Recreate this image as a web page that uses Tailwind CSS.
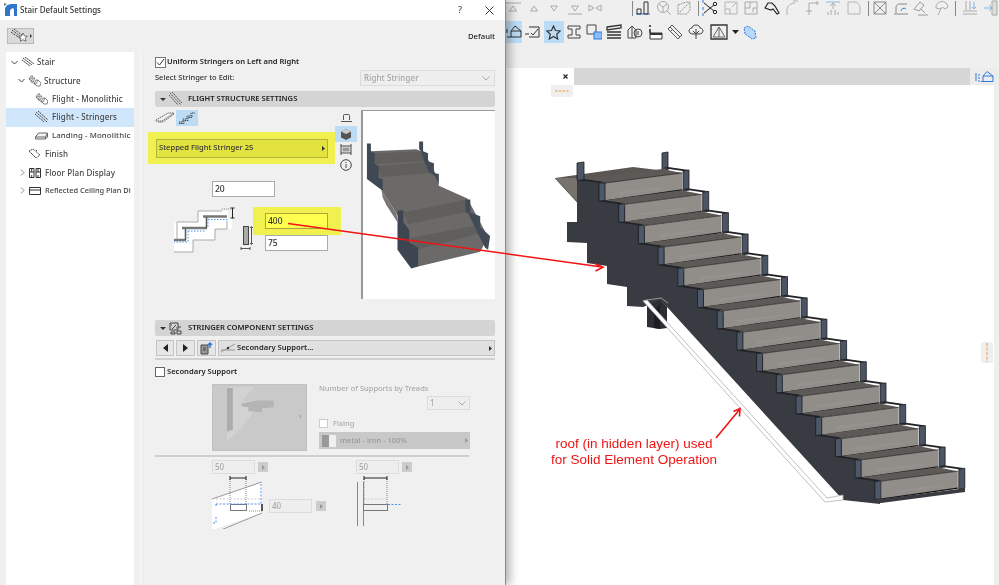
<!doctype html>
<html>
<head>
<meta charset="utf-8">
<title>Stair Default Settings</title>
<script src="https://cdn.jsdelivr.net/npm/@tailwindcss/browser@4"></script>
</head>
<body class="m-0 overflow-hidden bg-white">
<div class="relative flex h-[585px] w-[999px] overflow-hidden bg-white font-['Noto_Sans',sans-serif] text-[8px] text-[#222] blur-[0.35px]">

  <!-- DIALOG -->
  <section class="relative z-10 flex h-full w-[506px] shrink-0 flex-col border-r border-[#8a8a8a] bg-[#f0f0f0] shadow-[4px_0_9px_rgba(0,0,0,0.3)]">
    <header class="flex h-[20px] shrink-0 items-center bg-white">
      <svg class="ml-[4px] h-[16px] w-[14px] shrink-0" viewBox="0 0 14 16"><path d="M1 14V8C1 4 4 2 8 2h5v12h-3V8C10 6.500 9 6 8 6.500 6.500 7 6 8 6 10v4z" fill="#2f76c9"/><path d="M0 1l3 1-3 2z" fill="#777"/></svg>
      <span class="ml-[2px] text-[8px] font-medium text-[#333]">Stair Default Settings</span>
      <span class="ml-auto text-[9px] text-[#333]">?</span>
      <svg class="ml-[23px] mr-[11px] h-[9px] w-[9px] shrink-0" viewBox="0 0 9 9"><path d="M.5.5l8 8M8.500.5l-8 8" stroke="#333" fill="none"/></svg>
    </header>

    <div class="flex h-[32px] shrink-0 items-start justify-between px-[7px] pt-[8px]">
      <div class="flex h-[16px] w-[27px] items-center justify-center border border-[#bbb] bg-[#d9d9d9]">
        <svg class="h-[14px] w-[22px]" viewBox="0 0 22 14"><path d="M2 1l12 9M4 0l12 9M1 3l10 7" stroke="#444" stroke-dasharray="2 1" fill="none"/><path d="M13 4l1.500 3 3 .3-2.300 2 .7 3-2.900-1.600-2.700 1.600.7-3-2.300-2 3-.3z" fill="#fff" stroke="#555" stroke-width=".8"/><path d="M20 5l2 2-2 2z" fill="#333"/></svg>
      </div>
      <span class="mr-[3px] mt-[3px] text-[7.700px] font-medium text-[#222]">Default</span>
    </div>

    <div class="flex min-h-0 flex-1 pl-[6px]">
      <!-- tree -->
      <nav class="h-full w-[128px] shrink-0 overflow-hidden whitespace-nowrap bg-white pt-[1px] text-[8px] font-medium tracking-[0.1px] text-[#444]">
        <div class="flex h-[18.400px] items-center pl-[5px]">
          <svg class="h-[7px] w-[7px] shrink-0" viewBox="0 0 7 7"><path d="M.5 2l3 3 3-3" stroke="#444" fill="none"/></svg>
          <svg class="ml-[4px] h-[10px] w-[12px] shrink-0" viewBox="0 0 12 10"><path d="M1 1l9 7M3 0l9 7M0 3l8 6" stroke="#333" stroke-dasharray="2 .6" fill="none"/></svg>
          <span class="ml-[3px]">Stair</span>
        </div>
        <div class="flex h-[18.400px] items-center pl-[12px]">
          <svg class="h-[7px] w-[7px] shrink-0" viewBox="0 0 7 7"><path d="M.5 2l3 3 3-3" stroke="#444" fill="none"/></svg>
          <svg class="ml-[3px] h-[12px] w-[13px] shrink-0" viewBox="0 0 13 12"><path d="M1 4l2-3h2l-2 3zM3 7l2-4h2L5 7zM6 9l2-4h2L8 9zM1 4l8 7h3l1-3-3-3" stroke="#666" stroke-width=".8" fill="none"/></svg>
          <span class="ml-[3px]">Structure</span>
        </div>
        <div class="flex h-[18.400px] items-center pl-[29px]">
          <svg class="h-[12px] w-[13px] shrink-0" viewBox="0 0 13 12"><path d="M1 4l2-3h2l-2 3zM3 7l2-4h2L5 7zM6 9l2-4h2L8 9zM1 4l8 7h3l1-3-3-3" stroke="#666" stroke-width=".8" fill="none"/></svg>
          <span class="ml-[4px]">Flight - Monolithic</span>
        </div>
        <div class="flex h-[18.400px] items-center bg-[#cfe6fb] pl-[29px]">
          <svg class="h-[12px] w-[13px] shrink-0" viewBox="0 0 13 12"><path d="M1 1l11 10M3 0l10 9M0 3l9 8" stroke="#444" stroke-dasharray="2 .7" fill="none"/></svg>
          <span class="ml-[4px]">Flight - Stringers</span>
        </div>
        <div class="flex h-[18.400px] items-center pl-[29px]">
          <svg class="h-[9px] w-[13px] shrink-0" viewBox="0 0 13 9"><path d="M.5 6l3-4h9l-2 4zM.5 6v2h10V6M10.500 8l2-2V2" stroke="#666" fill="#f4f4f4"/></svg>
          <span class="ml-[4px] text-[7.800px]">Landing - Monolithic</span>
        </div>
        <div class="flex h-[18.400px] items-center pl-[22px]">
          <svg class="h-[12px] w-[13px] shrink-0" viewBox="0 0 13 12"><path d="M1 3l4-2 7 6-4 3zM3 6l1-1M6 9l1-1M9 2l-1 1" stroke="#444" stroke-dasharray="1.500 .6" fill="none"/></svg>
          <span class="ml-[4px]">Finish</span>
        </div>
        <div class="flex h-[18.400px] items-center pl-[14px]">
          <svg class="h-[7px] w-[5px] shrink-0" viewBox="0 0 5 7"><path d="M1 .5l3 3-3 3" stroke="#888" fill="none"/></svg>
          <svg class="ml-[4px] h-[10px] w-[12px] shrink-0" viewBox="0 0 12 10"><path d="M.5.500h4.500v9H.5zM7 .500h4.500v9H7zM.5 4h4.500M7 4h4.500M2.700.500V4M9 .500V4M2.700 7v2.500M9 7v2.500" stroke="#333" fill="none"/></svg>
          <span class="ml-[4px]">Floor Plan Display</span>
        </div>
        <div class="flex h-[18.400px] items-center pl-[14px]">
          <svg class="h-[7px] w-[5px] shrink-0" viewBox="0 0 5 7"><path d="M1 .5l3 3-3 3" stroke="#888" fill="none"/></svg>
          <svg class="ml-[4px] h-[8px] w-[12px] shrink-0" viewBox="0 0 12 8"><path d="M.5.500h11v7H.5zM.5 3h11" stroke="#333" fill="none"/></svg>
          <span class="ml-[4px] text-[7.400px] tracking-normal">Reflected Ceiling Plan Di</span>
        </div>
      </nav>

      <!-- settings -->
      <div class="ml-[6px] flex h-full w-[365px] flex-col overflow-hidden border-l border-[#f8f8f8] pl-[14px] pr-[10px] font-medium">
        <div class="mt-[3px] flex h-[14px] shrink-0 items-center">
          <span class="flex h-[11px] w-[11px] shrink-0 items-center justify-center border border-[#777] bg-white">
            <svg class="h-[9px] w-[9px]" viewBox="0 0 9 9"><path d="M1 4.500l2.500 2.500L8 1" stroke="#333" fill="none"/></svg>
          </span>
          <span class="ml-[1px] text-[7.600px] font-semibold text-[#222]">Uniform Stringers on Left and Right</span>
        </div>
        <div class="mt-[1px] flex h-[16px] shrink-0 items-center justify-between">
          <span class="text-[7.500px] text-[#333]">Select Stringer to Edit:</span>
          <div class="flex h-[16px] w-[135px] items-center justify-between border border-[#dcdcdc] bg-[#eee] pl-[3px] pr-[4px] tracking-[0.1px] text-[#a5a5a5]">
            <span>Right Stringer</span>
            <svg class="h-[5px] w-[8px]" viewBox="0 0 8 5"><path d="M.5.500L4 4 7.500.5" stroke="#aaa" fill="none"/></svg>
          </div>
        </div>
        <div class="mt-[5px] flex h-[16px] shrink-0 items-center rounded-[2px] bg-[#d4d4d4] pl-[5px]">
          <svg class="h-[3px] w-[6px]" viewBox="0 0 6 3"><path d="M0 0h6L3 3z" fill="#333"/></svg>
          <svg class="ml-[3px] h-[14px] w-[13px]" viewBox="0 0 13 14"><path d="M1 1l11 12M3 0l10 11M0 3l9 10" stroke="#555" stroke-dasharray="2 .7" fill="none"/></svg>
          <span class="ml-[6px] text-[7.600px] font-semibold text-[#222]">FLIGHT STRUCTURE SETTINGS</span>
        </div>

        <div class="mt-[3px] flex shrink-0">
          <div class="w-[206px] shrink-0">
            <div class="flex h-[16px] items-center">
              <svg class="h-[14px] w-[20px]" viewBox="0 0 20 14"><path d="M1 9l12-7 6 0-12 8H1zM3 11h5l11-8" stroke="#666" stroke-dasharray="1.500 .7" fill="none"/></svg>
              <span class="ml-[1px] flex h-[16px] w-[22px] items-center justify-center bg-[#bcdcf5]">
                <svg class="h-[12px] w-[18px]" viewBox="0 0 18 12"><path d="M1 10h4V7h4V4h4V1h4M1 11.500h5V8.500h4V5.500h4V3" stroke="#444" stroke-dasharray="1.500 .7" fill="none"/></svg>
              </span>
            </div>
            <div class="-ml-[7px] mt-[6px] flex h-[32px] w-[187px] items-center bg-[#f0f050] pl-[8px]">
              <div class="flex h-[19px] w-[172px] items-center justify-between border border-[#b3b33c] bg-[#e3e340] pl-[2px] pr-[2px] text-[7.600px] text-[#333]">
                <span>Stepped Flight Stringer 25</span>
                <svg class="h-[5px] w-[3px]" viewBox="0 0 3 5"><path d="M0 0l3 2.500L0 5z" fill="#333"/></svg>
              </div>
            </div>
            <div class="ml-[57px] mt-[17px] flex h-[16px] w-[63px] items-center border border-[#aaa] bg-white pl-[2px] text-[8.500px] text-[#333]">20</div>
            <div class="relative mt-[8px] flex h-[50px]">
              <svg class="ml-[19px] mt-[1px] h-[47px] w-[80px] shrink-0" viewBox="174 206 80 47">
                <path d="M174 252v-29h3v-1h21v-11h30v7h4v11h-17v11h-22v12z" fill="#fff"/>
                <path d="M177 240v-18h21v-11h24M174 252h19v-12h22v-11h12v-8" stroke="#aaa" fill="none"/>
                <path d="M203 216.500h24M182 228h25M174 240h12" stroke="#777" stroke-width="2.500" fill="none"/>
                <path d="M206.500 217v11M185.500 229v11" stroke="#555" stroke-width="1.500" fill="none"/>
                <path d="M208 219.500h20M208 219v9M188 231h18M188 231v11h-14" stroke="#4d94ee" stroke-dasharray="1.500 1.500" fill="none"/>
                <path d="M222 209h9" stroke="#888" stroke-dasharray="1 1" fill="none"/>
                <path d="M232.500 208v10M230.500 208h4M230.500 218h4" stroke="#222" fill="none"/>
                <rect x="243.500" y="226.500" width="5" height="18" fill="#aaa" stroke="#444"/>
                <path d="M251.500 227v17M250 228l1.500-1.500 1.500 1.500M250 243l1.500 1.500 1.500-1.500M241 248.500h9M241 247v3M250 247v3" stroke="#333" stroke-width=".8" fill="none"/>
              </svg>
              <div class="absolute left-[98px] top-[2px] h-[28px] w-[88px] bg-[#f0f050]"></div>
              <div class="absolute left-[110px] top-[8px] flex h-[16px] w-[63px] items-center border border-[#a7a73a] bg-[#ffff50] pl-[2px] text-[8.500px] text-[#333]">400</div>
              <div class="absolute left-[110px] top-[30px] flex h-[16px] w-[63px] items-center border border-[#aaa] bg-white pl-[2px] text-[8.500px] text-[#333]">75</div>
            </div>
          </div>
          <div class="-ml-[26px] flex h-[62px] w-[22px] shrink-0 flex-col items-center pt-[3px]">
            <svg class="h-[10px] w-[11px]" viewBox="0 0 11 10"><path d="M2.500 7V2.500a1 1 0 011-1h4a1 1 0 011 1V7M0 8.500h11" stroke="#555" fill="none"/></svg>
            <span class="mt-[3px] flex h-[16px] w-[22px] items-center justify-center bg-[#bcdcf5]">
              <svg class="h-[11px] w-[10px]" viewBox="0 0 10 11"><path d="M5 0l5 2.500v6L5 11 0 8.500v-6z" fill="#555"/><path d="M0 2.500L5 5l5-2.500L5 0z" fill="#ccc"/></svg>
            </span>
            <svg class="mt-[2px] h-[11px] w-[12px]" viewBox="0 0 12 11"><path d="M1 0v11M11 0v11M1 2h10M1 9h10" stroke="#444" fill="none"/><rect x="2.500" y="3.500" width="7" height="4" fill="#999"/></svg>
            <svg class="mt-[4px] h-[12px] w-[12px]" viewBox="0 0 12 12"><circle cx="6" cy="6" r="5.300" stroke="#444" fill="none"/><path d="M6 5v4M6 3v1" stroke="#444"/></svg>
          </div>
          <svg class="ml-[4px] h-[189px] w-[134px] border-l-2 border-t border-[#999] bg-white" viewBox="361 110 134 189">
            <path d="M369 150L415 148 423 151 435 173 438 185 467 198 475 213 488 237 480 252 417 267 410 250 402 225 395 213 380 190 370 167z" fill="#6c6a69"/>
            <path d="M380 190L395 213 396 222 385 205 381 197z" fill="#777573"/>
            <path d="M372 152L420 150 424 160 374 163zM376 165L425 161 431 172 379 176zM402 212L466 199 468 211 407 224zM409 238L476 225 478 234 415 250z" fill="#615f5e"/>
            <path d="M365 142L369 142 369 150 373 152 373 163 377 165 377 177 381 178 381 190 365 178z" fill="#3f4853"/>
            <path d="M396 210L402 210 402 222 408 230 408 242 417 248 417 267 410 269 396 250z" fill="#3d4550"/>
            <path d="M418 140L422 140 422 150 427 152 427 160 433 162 433 172 438 173 438 184 434 175 428 171 423 160 420 150 418 148z" fill="#414a57"/>
            <path d="M465 199L470 199 470 212 480 216 480 227 490 236 488 250 485 248 475 228 468 213 465 212z" fill="#414a57"/>
          </svg>
        </div>

        <div class="mt-[21px] flex h-[16px] shrink-0 items-center rounded-[2px] bg-[#d4d4d4] pl-[5px]">
          <svg class="h-[3px] w-[6px]" viewBox="0 0 6 3"><path d="M0 0h6L3 3z" fill="#333"/></svg>
          <svg class="ml-[3px] h-[13px] w-[13px]" viewBox="0 0 13 13"><path d="M1 1h8v7H1zM3 7l4-4M2 3h1M7 6h1M2 10h4v2H2zM8 9h4v3H8zM9 5h3" stroke="#444" fill="none"/></svg>
          <span class="ml-[6px] text-[7.600px] font-semibold text-[#222]">STRINGER COMPONENT SETTINGS</span>
        </div>
        <div class="mt-[4px] flex h-[17px] shrink-0 gap-[2px] pl-[1px]">
          <span class="flex h-[16px] w-[18px] items-center justify-center border border-[#c4c4c4] bg-[#e6e6e6]"><svg class="h-[8px] w-[5px]" viewBox="0 0 5 8"><path d="M5 0L0 4l5 4z" fill="#222"/></svg></span>
          <span class="flex h-[16px] w-[19px] items-center justify-center border border-[#c4c4c4] bg-[#e6e6e6]"><svg class="h-[8px] w-[5px]" viewBox="0 0 5 8"><path d="M0 0l5 4-5 4z" fill="#222"/></svg></span>
          <span class="flex h-[16px] w-[19px] items-center justify-center border border-[#c4c4c4] bg-[#e6e6e6]"><svg class="h-[13px] w-[13px]" viewBox="0 0 13 13"><path d="M1 3h7v9H1z" fill="#999" stroke="#444"/><path d="M3 6h3M3 8h3" stroke="#444"/><path d="M10 6V1M8 3l2-2 2 2" stroke="#2d7bdc" stroke-width="1.500" fill="none"/></svg></span>
          <div class="flex h-[16px] flex-1 items-center border border-[#c4c4c4] bg-[#e0e0e0] pl-[2px] pr-[2px]">
            <svg class="h-[10px] w-[14px]" viewBox="0 0 14 10"><path d="M0 9l14-8M0 7h14" stroke="#999" fill="none"/><circle cx="7" cy="5" r="1.200" fill="#333"/></svg>
            <span class="ml-[2px] text-[7.600px] font-semibold">Secondary Support...</span>
            <svg class="ml-auto h-[5px] w-[3px]" viewBox="0 0 3 5"><path d="M0 0l3 2.500L0 5z" fill="#333"/></svg>
          </div>
        </div>
        <div class="mt-[1px] h-[2px] shrink-0 bg-[#d0d0d0]"></div>
        <div class="mt-[6px] flex h-[12px] shrink-0 items-center">
          <span class="h-[10px] w-[10px] shrink-0 border border-[#666] bg-white"></span>
          <span class="ml-[2px] text-[7.600px] font-semibold">Secondary Support</span>
        </div>

        <div class="mt-[6px] flex h-[67px] shrink-0 pl-[57px]">
          <div class="relative h-[67px] w-[95px] border border-[#c0c0c0] bg-[#c9c9c9]">
            <svg class="h-full w-full" viewBox="212 384 95 67"><path d="M226 386h28l-12 14 20 2-25 30-11 10z" fill="#d2d2d2"/><path d="M226 387h6v43l-6 2z" fill="#acacac"/><path d="M241 403l16-3h17v7l-12 1v4l-14-1v-4l-7-1z" fill="#b4b4b4"/><path d="M301 414l2 2-2 3z" fill="#a5a5a5"/></svg>
          </div>
          <div class="ml-[12px] w-[151px] text-[#aaa]">
            <div class="-mt-[1px] text-[7.500px]">Number of Supports by Treads</div>
            <div class="ml-[108px] mt-[2px] flex h-[14px] w-[43px] items-center justify-between border border-[#dcdcdc] bg-[#eee] pl-[2px] pr-[3px]"><span>1</span><svg class="h-[5px] w-[8px]" viewBox="0 0 8 5"><path d="M.5.500L4 4 7.500.5" stroke="#aaa" fill="none"/></svg></div>
            <div class="mt-[8px] flex h-[10px] items-center"><span class="h-[9px] w-[9px] border border-[#ccc] bg-white"></span><span class="ml-[5px] text-[7.500px]">Fixing</span></div>
            <div class="mt-[4px] flex h-[17px] items-center bg-[#c8c8c8] pl-[3px] pr-[2px] text-[#999]">
              <span class="h-[12px] w-[7px] bg-[#999]"></span><span class="h-[12px] w-[7px] bg-[#f0f0f0]"></span>
              <span class="ml-[4px] text-[7.500px]">metal - iron - 100%</span>
              <svg class="ml-auto h-[5px] w-[3px]" viewBox="0 0 3 5"><path d="M0 0l3 2.500L0 5z" fill="#999"/></svg>
            </div>
          </div>
        </div>
        <div class="mt-[4px] h-[2px] w-[314px] shrink-0 bg-[#cfcfcf]"></div>

        <div class="mt-[3px] flex shrink-0 pl-[57px] text-[#a8a8a8]">
          <div class="w-[144px]">
            <div class="flex items-center">
              <span class="flex h-[14px] w-[43px] items-center border border-[#dcdcdc] bg-[#eee] pl-[2px]">50</span>
              <span class="ml-[3px] flex h-[10px] w-[10px] items-center justify-center bg-[#ccc]"><svg class="h-[5px] w-[3px]" viewBox="0 0 3 5"><path d="M0 0l3 2.500L0 5z" fill="#999"/></svg></span>
            </div>
            <div class="flex">
              <svg class="h-[55px] w-[52px] shrink-0" viewBox="212 473 52 55">
                <path d="M212 498l50-17v31l-50 17z" fill="#fff"/>
                <path d="M212 498l50-17M221 529l41-17" stroke="#999" fill="none"/>
                <path d="M230 478v25M246 478v25M249 510h13" stroke="#888" stroke-dasharray="1 1" fill="none"/>
                <path d="M230 477h16M230 475v4M246 475v4" stroke="#222" fill="none"/>
                <rect x="230.500" y="503.500" width="16" height="6" fill="none" stroke="#777"/>
                <path d="M216 503h46M261 483v20M216 503v3M216 516v6h-3" stroke="#4d94ee" stroke-dasharray="2 1.500" fill="none"/>
                <path d="M216 498h44" stroke="#ccc" stroke-dasharray="2 1.500" fill="none"/>
                <path d="M262 503v7" stroke="#222" stroke-width="1.500"/>
              </svg>
              <div class="ml-[5px] mt-[25px] flex h-[14px] items-center">
                <span class="flex h-[14px] w-[43px] items-center border border-[#dcdcdc] bg-[#eee] pl-[2px]">40</span>
                <span class="ml-[4px] flex h-[10px] w-[10px] items-center justify-center bg-[#ccc]"><svg class="h-[5px] w-[3px]" viewBox="0 0 3 5"><path d="M0 0l3 2.500L0 5z" fill="#999"/></svg></span>
              </div>
            </div>
          </div>
          <div>
            <div class="flex items-center">
              <span class="flex h-[14px] w-[43px] items-center border border-[#dcdcdc] bg-[#eee] pl-[2px]">50</span>
              <span class="ml-[3px] flex h-[10px] w-[10px] items-center justify-center bg-[#ccc]"><svg class="h-[5px] w-[3px]" viewBox="0 0 3 5"><path d="M0 0l3 2.500L0 5z" fill="#999"/></svg></span>
            </div>
            <svg class="h-[55px] w-[52px]" viewBox="356 473 52 55">
              <path d="M357.500 481v44M363.500 481v44" stroke="#888" fill="none"/>
              <path d="M364 498h22" stroke="#ccc" stroke-dasharray="2 1.500" fill="none"/>
              <path d="M364 478v25M387 478v25" stroke="#888" stroke-dasharray="1 1" fill="none"/>
              <path d="M364 477h23M364 475v4M387 475v4" stroke="#222" fill="none"/>
              <rect x="363.500" y="503.500" width="24" height="6" fill="none" stroke="#777"/>
              <path d="M388 503.500h14" stroke="#4d94ee" stroke-dasharray="2 1.500" fill="none"/>
            </svg>
          </div>
        </div>
      </div>
    </div>
  </section>

  <!-- APPLICATION -->
  <main class="relative flex h-full min-w-0 flex-1 flex-col bg-white">
    <div class="h-[68px] shrink-0 bg-[#efefef]">
      <div class="flex h-[20px] items-center gap-[4.500px] pb-[4px]">
        <svg class="-ml-[1px] h-[16px] w-[16px] shrink-0" viewBox="0 0 16 16"><path d="M0 3h16M4.500 11L8 6l3.500 5z" stroke="#aaa" fill="none"/></svg>
        <svg class="h-[16px] w-[16px] shrink-0" viewBox="0 0 16 16"><path d="M4.500 11L8 6l3.500 5z" stroke="#aaa" fill="none"/></svg>
        <svg class="h-[16px] w-[16px] shrink-0" viewBox="0 0 16 16"><path d="M4.500 6L8 11l3.500-5z" stroke="#aaa" fill="none"/></svg>
        <svg class="h-[16px] w-[16px] shrink-0" viewBox="0 0 16 16"><path d="M4.500 6L8 11l3.500-5zM1 14h14" stroke="#aaa" fill="none"/></svg>
        <svg class="h-[16px] w-[16px] shrink-0" viewBox="0 0 16 16"><path d="M2 5l5 3-5 3zM14 5L9 8l5 3z" stroke="#aaa" fill="none"/></svg>
        <span class="ml-[24.500px] h-[15px] w-px shrink-0 bg-[#888]"></span>
        <svg class="-ml-[2.500px] h-[16px] w-[16px] shrink-0" viewBox="0 0 16 16"><path d="M1 14h14" stroke="#2d7bdc"/><path d="M2 9h4v5H2zM9 2h4v12H9z" fill="none" stroke="#333"/></svg>
        <svg class="h-[16px] w-[16px] shrink-0" viewBox="0 0 16 16"><circle cx="7" cy="7" r="5.500" fill="none" stroke="#aaa"/><path d="M11 11l4 4M3 4l4 3 4-3M7 7v5" stroke="#aaa" fill="none"/></svg>
        <svg class="h-[16px] w-[16px] shrink-0" viewBox="0 0 16 16"><path d="M2 5l8-3h4v8l-3 4H2zM2 14l12-12" stroke="#999" fill="none" stroke-dasharray="2 .8"/></svg>
        <span class="ml-[1.500px] h-[15px] w-px shrink-0 bg-[#888]"></span>
        <svg class="-ml-[1.500px] h-[16px] w-[16px] shrink-0" viewBox="0 0 16 16"><path d="M2 3l10 8M2 13l10-8" stroke="#222" fill="none"/><circle cx="13" cy="4" r="1.700" fill="none" stroke="#222"/><circle cx="13" cy="12" r="1.700" fill="none" stroke="#222"/><path d="M1 0v3M1 7v3M1 13v3" stroke="#2d7bdc"/></svg>
        <svg class="h-[16px] w-[16px] shrink-0" viewBox="0 0 16 16"><path d="M2 2h12v12H2zM2 9h5v5M9 7l4-4" stroke="#b5b5b5" fill="none"/></svg>
        <svg class="h-[16px] w-[16px] shrink-0" viewBox="0 0 16 16"><path d="M2 2h12v12H2zM2 8h5V2M10 8h4M10 8v4" stroke="#a9a9a9" fill="none"/></svg>
        <svg class="h-[16px] w-[16px] shrink-0" viewBox="0 0 16 16"><path d="M1 8l3-5h4l3 3 4 7-2 1-4-5-2 1z" fill="none" stroke="#222" stroke-width="1.200"/></svg>
        <svg class="h-[16px] w-[16px] shrink-0" viewBox="0 0 16 16"><path d="M3 15V10C3 6 7 3 11 3M9 1l5 0" stroke="#b0b0b0" fill="none"/></svg>
        <svg class="h-[16px] w-[16px] shrink-0" viewBox="0 0 16 16"><path d="M4 15V3h10M1 11h6M12 1v4" stroke="#aaa" fill="none"/></svg>
        <svg class="h-[16px] w-[16px] shrink-0" viewBox="0 0 16 16"><path d="M1 2h14" stroke="#8ab8ea"/><path d="M8 3v6M5 6l3-3 3 3M3 15v-3M6 15v-5M10 15v-5M13 15v-3" stroke="#aaa" fill="none"/></svg>
        <svg class="h-[16px] w-[16px] shrink-0" viewBox="0 0 16 16"><path d="M2 2h7c3 0 5 3 5 6v6H2z" stroke="#b5b5b5" fill="none"/></svg>
        <span class="ml-[2px] h-[15px] w-px shrink-0 bg-[#888]"></span>
        <svg class="-ml-[1.500px] h-[16px] w-[16px] shrink-0" viewBox="0 0 16 16"><path d="M2 2h12v12H2zM2 2l12 12M14 2L2 14" stroke="#888" fill="none"/></svg>
        <svg class="h-[16px] w-[16px] shrink-0" viewBox="0 0 16 16"><path d="M3 13V7c0-2 2-3 4-3h7M1 14h14" stroke="#888" fill="none"/><path d="M8 11a3 3 0 015-2" stroke="#2d7bdc" fill="none"/></svg>
        <svg class="h-[16px] w-[16px] shrink-0" viewBox="0 0 16 16"><path d="M1 9l6-7 4 3-5 6zM8 9l4 4M5 15h10" stroke="#999" fill="none"/></svg>
        <svg class="h-[16px] w-[16px] shrink-0" viewBox="0 0 16 16"><path d="M2 8a6 6 0 0112-1l-3 2a3 3 0 00-5 0zM7 9l-3 6" stroke="#aaa" fill="none"/></svg>
        <span class="ml-[1px] h-[15px] w-px shrink-0 bg-[#888]"></span>
        <svg class="ml-[1.500px] h-[16px] w-[16px] shrink-0" viewBox="0 0 16 16"><path d="M1 11h14M1 14h14M4 1v9M8 1v9" stroke="#aaa" fill="none"/><path d="M12 2v7M10 7l2 2 2-2" stroke="#7fb2ea" fill="none"/></svg>
        <svg class="h-[16px] w-[16px] shrink-0" viewBox="0 0 16 16"><path d="M9 1h5v14H9z" fill="#ddd" stroke="#aaa"/><path d="M1 8h7M6 5l3 3-3 3" stroke="#7fb2ea" fill="none"/></svg>
      </div>
      <div class="flex h-[24px] items-center gap-[4.300px]">
        <span class="flex h-[22px] w-[16px] shrink-0 items-center justify-center bg-[#bcdcf5]">
          <svg class="h-[14px] w-[16px]" viewBox="0 0 16 14"><path d="M1 12h14V6L9 1 5 6v6M5 6h10M1 4v4" stroke="#333" fill="none"/></svg>
        </span>
        <svg class="-ml-[1px] h-[16px] w-[16px] shrink-0" viewBox="0 0 16 16"><path d="M4 3h10v10H4M0 10h4" stroke="#333" fill="none"/><path d="M6 9l2 2 5-6" stroke="#333" fill="none"/></svg>
        <span class="-mx-[2px] flex h-[22px] w-[20px] shrink-0 items-center justify-center bg-[#bcdcf5]">
          <svg class="h-[15px] w-[15px]" viewBox="0 0 15 15"><path d="M7.500 1l2 4.500 4.700.5-3.500 3.300 1 4.700-4.200-2.500L3.300 14l1-4.700L.8 6l4.700-.5z" fill="none" stroke="#333" stroke-width="1.200"/></svg>
        </span>
        <svg class="h-[16px] w-[16px] shrink-0" viewBox="0 0 16 16"><path d="M2 2h12v3H10v6h4v3H2v-3h4V5H2z" fill="none" stroke="#444"/></svg>
        <svg class="h-[16px] w-[16px] shrink-0" viewBox="0 0 16 16"><path d="M1 1h9v9H1z" fill="none" stroke="#444"/><rect x="8" y="8" width="8" height="7" fill="#8cbef5" stroke="#2d7bdc"/></svg>
        <svg class="h-[16px] w-[16px] shrink-0" viewBox="0 0 16 16"><path d="M1 3l14-2v3L1 6zM1 8h14M1 11h14M1 14h14" stroke="#333" stroke-width="1.300" fill="none"/></svg>
        <svg class="h-[16px] w-[16px] shrink-0" viewBox="0 0 16 16"><path d="M1 14V6l4-4 4 4v8zM5 2v12" fill="none" stroke="#444"/><circle cx="11" cy="9" r="4" fill="none" stroke="#444"/><path d="M11 7v4" stroke="#444"/></svg>
        <svg class="h-[16px] w-[16px] shrink-0" viewBox="0 0 16 16"><path d="M3 1v2M3 5v4" stroke="#222" stroke-width="1.500"/><path d="M3 9h12v6H3z" fill="#fff" stroke="#333"/><path d="M3 9h12v2H3z" fill="#333"/></svg>
        <svg class="h-[16px] w-[16px] shrink-0" viewBox="0 0 16 16"><path d="M1 5l4-4 10 10-4 4zM3 3l10 10M4 7l2-2" fill="none" stroke="#555"/></svg>
        <svg class="h-[16px] w-[16px] shrink-0" viewBox="0 0 16 16"><path d="M8 1c3 0 4 2 4 3 2 0 3 2 3 3s-1 3-4 3H5C2 10 1 8 1 7s1-3 3-3c0-1 1-3 4-3zM8 5v10M5 7l3 3 3-3" fill="none" stroke="#444"/></svg>
        <svg class="ml-[2px] h-[16px] w-[18px] shrink-0" viewBox="0 0 18 16"><path d="M1 1h16v14H1z" fill="none" stroke="#333" stroke-width="1.300"/><path d="M3 13L9 3l6 10zM9 3v10" fill="none" stroke="#666"/></svg>
        <svg class="h-[4px] w-[7px] shrink-0" viewBox="0 0 7 4"><path d="M0 0h7L3.500 4z" fill="#222"/></svg>
        <svg class="-ml-[1px] h-[15px] w-[14px] shrink-0" viewBox="0 0 14 15"><path d="M1 3l4-2 7 5 1 7-4 1-7-5z" fill="#b9d7f8" stroke="#2d7bdc" stroke-dasharray="2 1"/></svg>
      </div>
    </div>
    <div class="flex h-[17px] shrink-0 bg-[#d6d6d6]">
      <div class="flex h-full w-[68px] items-center justify-end bg-white pr-[6px]">
        <svg class="h-[5px] w-[5px]" viewBox="0 0 5 5"><path d="M.5.5l4 4M4.500.5l-4 4" stroke="#222" stroke-width="1.200"/></svg>
      </div>
      <div class="ml-auto flex h-full w-[29px] items-center bg-[#ececec] pl-[5px]">
        <svg class="h-[11px] w-[19px]" viewBox="0 0 19 11"><path d="M6 10.500h12V5L12 .5 8 5v5.500M8 5h10M1 2v8M3 4h2M3 7h2M3 10h2" stroke="#2d7bdc" fill="none"/></svg>
      </div>
    </div>
    <div class="relative min-h-0 flex-1 bg-white">
      <div class="ml-[45px] flex h-[12px] w-[22px] items-center justify-center rounded-b-[3px] bg-[#efefef]">
        <svg class="h-[2px] w-[14px]" viewBox="0 0 14 2"><path d="M0 1h14" stroke="#f09a45" stroke-dasharray="2.500 1.200"/></svg>
      </div>
      <div class="absolute right-0 top-0 h-full w-[5px] bg-[#efefef]"></div>
      <div class="absolute right-[6px] top-[257px] flex h-[21px] w-[12px] justify-center rounded-[2px] bg-[#efefef]">
        <svg class="mt-[1px] h-[19px] w-[2px]" viewBox="0 0 2 19"><path d="M1 0v19" stroke="#f59a3c" stroke-dasharray="3 1.500"/></svg>
      </div>
    </div>
  </main>

  <!-- ANNOTATIONS AND 3D MODEL, drawn over dialog and canvas -->
  <svg class="pointer-events-none absolute left-0 top-0 z-20 h-[585px] w-[999px]" viewBox="0 0 999 585">
    <defs>
      <g id="stp">
        <path d="M585 179l77-10 20 4-77 10z" fill="#5c5956"/>
        <path d="M605 183l77-10v17l-77 11z" fill="#918e8a"/>
        <path d="M620 192l40-5 10 1-50 7z" fill="#9a9793" opacity=".5"/>
        <path d="M605 183l77-10" stroke="#1e1e20" stroke-width=".7" fill="none"/>
        <path d="M605 201l77-11" stroke="#141416" stroke-width="1.300" fill="none"/>
        <path d="M662 168l21 3 6-1-21-3z" fill="#232428"/>
        <path d="M683 171l6-1v20l-6 1z" fill="#4b5564" stroke="#18191c" stroke-width=".8"/>
        <path d="M579 180l21 3 5-1-21-3z" fill="#222327"/>
        <path d="M599 183h6v18h-6z" fill="#4d5868" stroke="#18191c" stroke-width=".8"/>
      </g>
    </defs>
    <path d="M647 303v24l13 2 7-1v-21l-7-8z" fill="#2d2e33"/>
    <path d="M654 311v17l6 1V304z" fill="#1d1d20"/>
    <path d="M577 178v44h-10v20l20 1v20l20 3v18l20 3v19l16 1 17-7 8 8 175 192 37 4 0-22L600 182z" fill="#393b42"/>
    <path d="M643 301l182 201 18-2v-5l-16 3-180-198z" fill="#fff"/>
    <path d="M643 301l182 201 18-2v-5l-16 3-180-198zM643 301l4-1 14-2 7 5" stroke="#b0b0b0" stroke-width=".8" fill="none"/>
    <path d="M555 178l22 24v-24z" fill="#77726c"/>
    <path d="M555 178l78-11 50 6-78 10-28-5z" fill="#5a5753"/>
    <path d="M555 178l22 24" stroke="#333" stroke-width=".7" fill="none"/>
    <path d="M577 163l7-1v19l-7-1zM662 153l6-1v19l-6-1z" fill="#4b5564" stroke="#1c1d20" stroke-width=".8"/>
    <use href="#stp"/>
    <use href="#stp" x="19.700" y="21.300"/>
    <use href="#stp" x="39.400" y="42.600"/>
    <use href="#stp" x="59.100" y="63.900"/>
    <use href="#stp" x="78.800" y="85.200"/>
    <use href="#stp" x="98.500" y="106.500"/>
    <use href="#stp" x="118.200" y="127.800"/>
    <use href="#stp" x="137.900" y="149.100"/>
    <use href="#stp" x="157.600" y="170.400"/>
    <use href="#stp" x="177.300" y="191.700"/>
    <use href="#stp" x="197" y="213"/>
    <use href="#stp" x="216.700" y="234.300"/>
    <use href="#stp" x="236.400" y="255.600"/>
    <use href="#stp" x="256.100" y="276.900"/>
    <use href="#stp" x="275.800" y="298.200"/>
    <path d="M876 503l5 0 84-11v-4l-6 1-78 10h-5z" fill="#3a3b40"/>
    <path d="M288 223.500L602 267M595 263.500l8 3.700-7.500 3.800" stroke="#f01414" stroke-width="1.600" fill="none"/>
    <path d="M716 438l24-29M733.500 411.500l6.500-3-.5 8" stroke="#f01414" stroke-width="1.600" fill="none"/>
  </svg>

  <div class="absolute left-[517px] top-[436px] z-30 w-[234px] text-center font-['Liberation_Sans',sans-serif] text-[13.500px] leading-[16px] text-[#f01414]">roof (in hidden layer) used<br>for Solid Element Operation</div>
</div>
</body>
</html>
